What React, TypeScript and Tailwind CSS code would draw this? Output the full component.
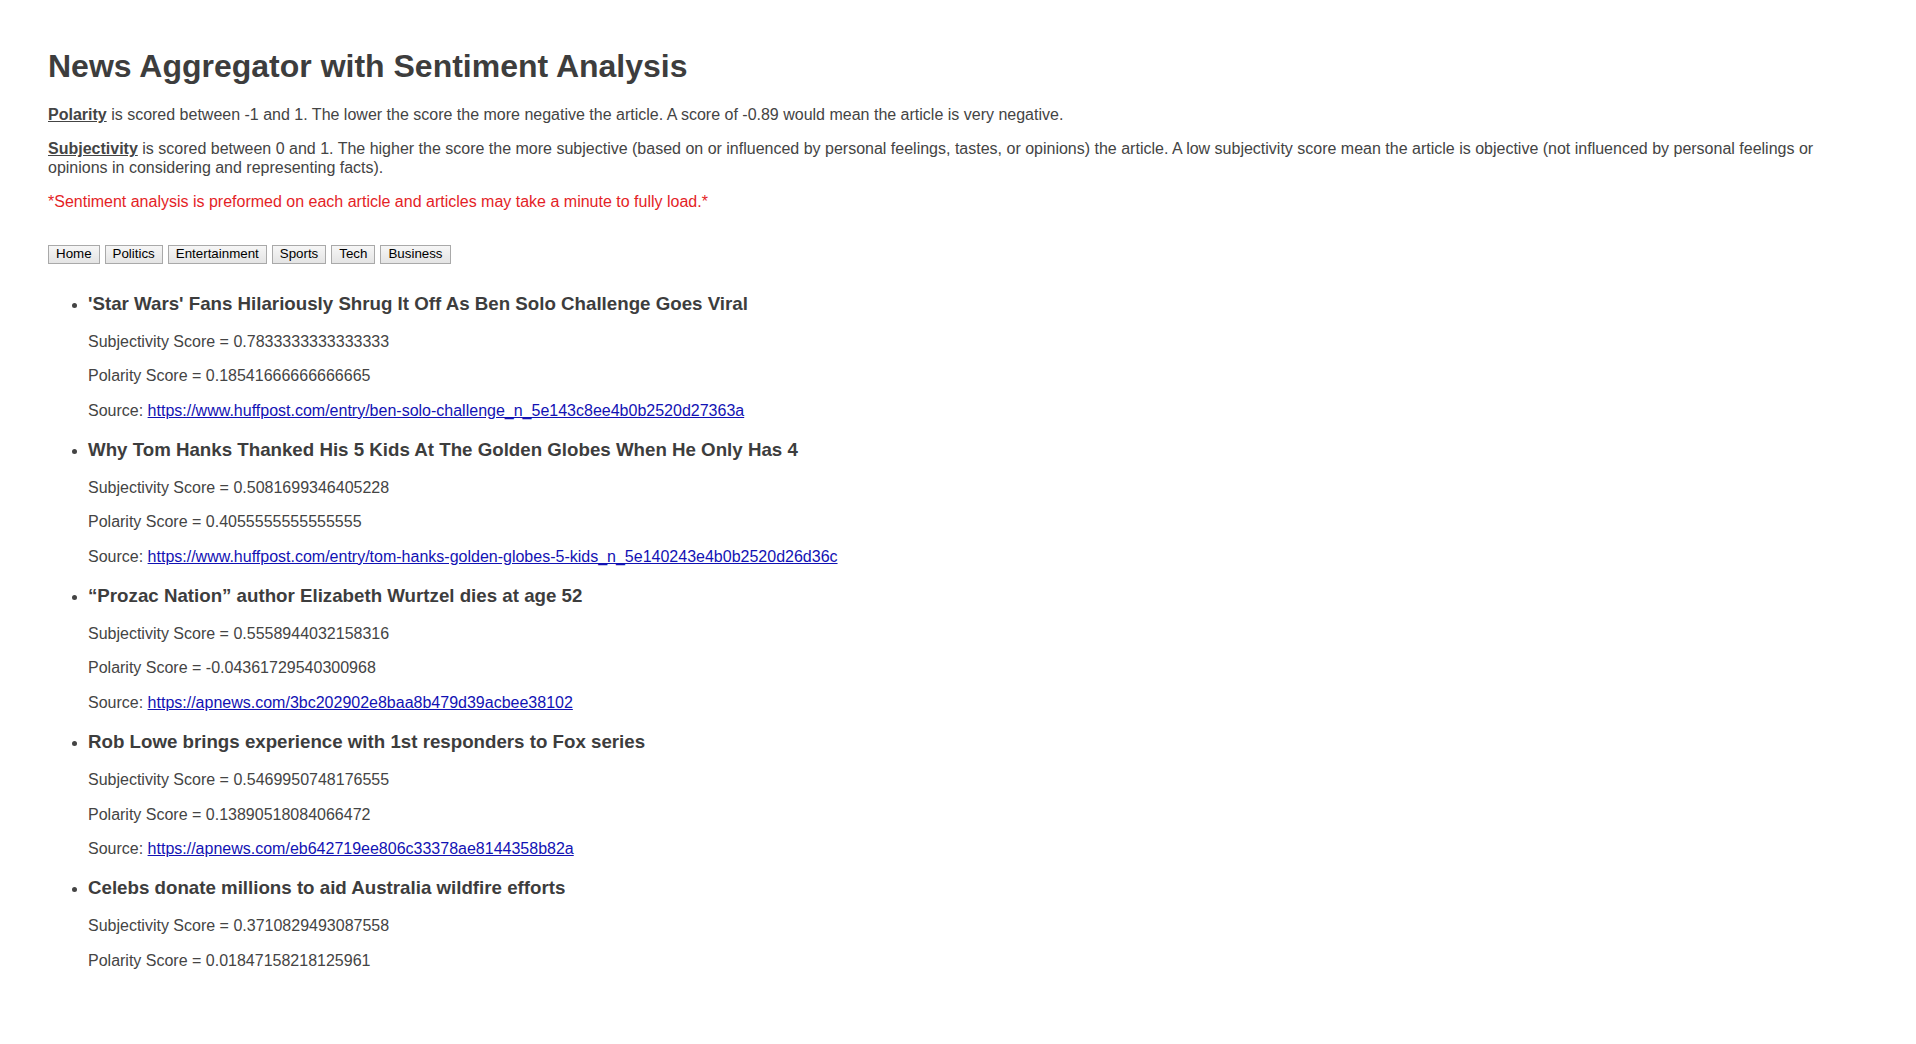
const categories = ["Home", "Politics", "Entertainment", "Sports", "Tech", "Business"];

type Article = {
  title: string;
  subjectivity: string;
  polarity: string;
  source?: string;
};

const articles: Article[] = [
  {
    title: "'Star Wars' Fans Hilariously Shrug It Off As Ben Solo Challenge Goes Viral",
    subjectivity: "0.7833333333333333",
    polarity: "0.18541666666666665",
    source: "https://www.huffpost.com/entry/ben-solo-challenge_n_5e143c8ee4b0b2520d27363a",
  },
  {
    title: "Why Tom Hanks Thanked His 5 Kids At The Golden Globes When He Only Has 4",
    subjectivity: "0.5081699346405228",
    polarity: "0.4055555555555555",
    source: "https://www.huffpost.com/entry/tom-hanks-golden-globes-5-kids_n_5e140243e4b0b2520d26d36c",
  },
  {
    title: "\u201cProzac Nation\u201d author Elizabeth Wurtzel dies at age 52",
    subjectivity: "0.5558944032158316",
    polarity: "-0.04361729540300968",
    source: "https://apnews.com/3bc202902e8baa8b479d39acbee38102",
  },
  {
    title: "Rob Lowe brings experience with 1st responders to Fox series",
    subjectivity: "0.5469950748176555",
    polarity: "0.13890518084066472",
    source: "https://apnews.com/eb642719ee806c33378ae8144358b82a",
  },
  {
    title: "Celebs donate millions to aid Australia wildfire efforts",
    subjectivity: "0.3710829493087558",
    polarity: "0.01847158218125961",
  },
];

const App = () => {
  return (
    <div className="min-h-screen bg-white px-[48px] pt-[27px] pb-10 font-['Liberation_Sans',Arial,sans-serif] text-[16px] leading-[18.4px] text-[#444]">
      <h1 className="my-[21px] text-[32px] leading-[37px] font-bold text-[#3d3d3d]">
        News Aggregator with Sentiment Analysis
      </h1>
      <p className="my-4">
        <span className="font-bold underline">Polarity</span> is scored between -1 and 1. The lower the score the
        more negative the article. A score of -0.89 would mean the article is very negative.
      </p>
      <p className="my-4">
        <span className="font-bold underline">Subjectivity</span> is scored between 0 and 1. The higher the score the
        more subjective (based on or influenced by personal feelings, tastes, or opinions) the article. A low
        subjectivity score mean the article is objective (not influenced by personal feelings or opinions in
        considering and representing facts).
      </p>
      <p className="my-4 text-[#e41e26]">
        *Sentiment analysis is preformed on each article and articles may take a minute to fully load.*
      </p>

      <div className="mt-[33px] flex gap-[5px]">
        {categories.map((c) => (
          <button
            key={c}
            className="h-[19px] border border-[#a9a9a9] bg-gradient-to-b from-[#f6f6f6] to-[#e4e4e4] px-[7px] text-[13.33px] leading-[16px] text-black"
          >
            {c}
          </button>
        ))}
      </div>

      <ul className="mt-[29px] list-disc pl-[40px]">
        {articles.map((a) => (
          <li key={a.title} className="marker:text-[#444]">
            <h3 className="my-[18.7px] text-[18.72px] leading-[21.5px] font-bold text-[#3d3d3d]">{a.title}</h3>
            <p className="my-4">Subjectivity Score = {a.subjectivity}</p>
            <p className="my-4">Polarity Score = {a.polarity}</p>
            {a.source && (
              <p className="my-4">
                Source:{" "}
                <a href={a.source} className="text-[#1212b4] underline">
                  {a.source}
                </a>
              </p>
            )}
          </li>
        ))}
      </ul>
    </div>
  );
};

export default App;
